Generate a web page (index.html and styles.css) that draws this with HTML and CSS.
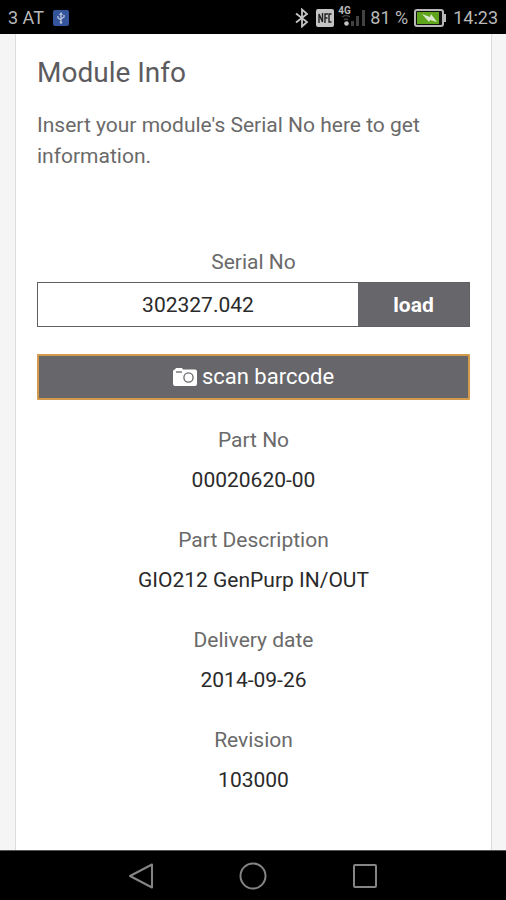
FILE: index.html
```html
<!DOCTYPE html>
<html lang="en">
<head>
<meta charset="utf-8">
<meta name="viewport" content="width=device-width, initial-scale=1">
<title>Module Info</title>
<link rel="stylesheet" href="styles.css">
</head>
<body>
<header class="status">
  <div class="status-group">
    <span>3 AT</span>
    <svg class="app-icon" width="16" height="16" viewBox="0 0 16 16" aria-hidden="true">
      <rect width="16" height="16" rx="2" fill="#34549b"/>
      <path d="M8 13V4M8 10L5 8V6M8 9l3-2V5" fill="none" stroke="#b9c4dc" stroke-width="1.300"/>
      <path d="M8 2L6 5h4z" fill="#b9c4dc"/>
      <circle cx="8" cy="12.500" r="1.300" fill="#b9c4dc"/>
    </svg>
  </div>
  <div class="status-group">
    <svg width="14" height="20" viewBox="0 0 14 20" aria-hidden="true">
      <path d="M1 5.500L12 14 7 18.500V1.500L12 6 1 14.500" fill="none" stroke="#c4c4c4" stroke-width="1.800"/>
    </svg>
    <svg class="nfc" width="18" height="18" viewBox="0 0 18 18" aria-hidden="true">
      <rect width="18" height="18" rx="2" fill="#c4c4c4"/>
      <path d="M3 14V5l3.500 8V4M9 14V5h3M9 9h2.500M15.500 5H13v8h2.500" fill="none" stroke="#222" stroke-width="1.400"/>
    </svg>
    <div class="signal">
      <span class="network">4G</span>
      <svg width="28" height="20" viewBox="0 0 28 20" aria-hidden="true">
        <path d="M4 9q4-3 8 0M6 12q2-2 4 0" fill="none" stroke="#444" stroke-width="1.500"/>
        <circle cx="8.500" cy="15.500" r="2.300" fill="#c4c4c4"/>
        <path d="M13 18v-5h3v5zM18 18V8h3v10zM24 18V2h3v16z" fill="#414141"/>
      </svg>
    </div>
    <span class="percent">81 %</span>
    <svg class="battery" width="33" height="18" viewBox="0 0 33 18" aria-hidden="true">
      <rect x="1" y="1" width="28" height="16" rx="2" fill="#111" stroke="#b8b8b8" stroke-width="2"/>
      <path d="M30 5h2v8h-2z" fill="#b8b8b8"/>
      <path d="M3 3h22v12H3z" fill="#5fa51b"/>
      <path d="M8 5l8 3 1-3 6 8-7-2-1 2z" fill="#dce9ce"/>
    </svg>
    <span>14:23</span>
  </div>
</header>

<main class="card">
  <h1>Module Info</h1>
  <p class="intro">Insert your module's Serial No here to get information.</p>
  <form class="lookup">
    <label for="serial">Serial No</label>
    <div class="field">
      <input id="serial" type="text" value="302327.042">
      <button class="load" type="button">load</button>
    </div>
    <button class="scan" type="button">
      <svg width="24" height="18" viewBox="0 0 24 18" aria-hidden="true">
        <path d="M2 1.500L3 0h6l1 1.500h12q2 0 2 2V16q0 2-2 2H2q-2 0-2-2V3.500q0-2 2-2z" fill="#fff"/>
        <path d="M3 4h6" stroke="#67666a" stroke-width="1.300"/>
        <circle cx="15.500" cy="9.500" r="4.600" fill="none" stroke="#67666a" stroke-width="1.300"/>
      </svg>
      <span>scan barcode</span>
    </button>
  </form>
  <dl class="details">
    <div><dt>Part No</dt><dd>00020620-00</dd></div>
    <div><dt>Part Description</dt><dd>GIO212 GenPurp IN/OUT</dd></div>
    <div><dt>Delivery date</dt><dd>2014-09-26</dd></div>
    <div><dt>Revision</dt><dd>103000</dd></div>
  </dl>
</main>

<nav class="system-nav" aria-label="System">
  <button type="button" aria-label="Back">
    <svg width="28" height="28" viewBox="0 0 28 28"><path d="M25 2.500v23L3 14z"/></svg>
  </button>
  <button type="button" aria-label="Home">
    <svg width="28" height="28" viewBox="0 0 28 28"><circle cx="14" cy="14" r="12.500"/></svg>
  </button>
  <button type="button" aria-label="Recent apps">
    <svg width="28" height="28" viewBox="0 0 28 28"><rect x="3" y="3" width="22" height="22" rx="1"/></svg>
  </button>
</nav>
</body>
</html>
```
FILE: styles.css
```css
* {
  box-sizing: border-box;
}

body {
  margin: 0;
  min-height: 100vh;
  display: flex;
  flex-direction: column;
  background: #f5f5f5;
  color: #6a6a6a;
  font: 21px/30px Roboto, "Liberation Sans", sans-serif;
}

button,
input {
  font: inherit;
  margin: 0;
}

.status {
  display: flex;
  justify-content: space-between;
  align-items: center;
  height: 34px;
  padding: 2px 8px 0;
  background: #000;
  color: #b8b8b8;
  font-size: 18px;
  line-height: 32px;
}

.status-group {
  display: flex;
  align-items: center;
}

.app-icon {
  margin-left: 9px;
}

.nfc {
  margin-left: 7px;
}

.signal {
  position: relative;
  display: flex;
  margin: 0 4px;
}

.network {
  position: absolute;
  top: -3px;
  left: 0;
  font-size: 10px;
  font-weight: 700;
  line-height: 12px;
}

.battery {
  margin: 0 6px;
}

.card {
  flex: 1;
  margin: 0 14px 0 15px;
  padding: 24px 21px 30px;
  border: solid #dcdcdc;
  border-width: 0 1px;
  background: #fff;
}

h1 {
  margin: 0 0 22px;
  color: #5c5c60;
  font-size: 28px;
  font-weight: 400;
  line-height: 30px;
}

.intro {
  margin: 0 0 75px;
  line-height: 31px;
}

.lookup {
  display: flex;
  flex-direction: column;
  text-align: center;
}

.field {
  display: flex;
  height: 45px;
  margin: 5px 0 27px;
  border: 1px solid #606064;
}

.field input {
  flex: 1;
  min-width: 0;
  padding: 0;
  border: 0;
  background: #fff;
  color: #2a2a2a;
  text-align: center;
}

.load {
  width: 111px;
  padding: 0;
  border: 0;
  background: #67666a;
  color: #fff;
  font-weight: 700;
}

.scan {
  display: flex;
  align-items: center;
  justify-content: center;
  gap: 5px;
  height: 46px;
  padding: 0;
  border: 2px solid #d39a4c;
  border-radius: 1px;
  background: #67666a;
  color: #fff;
  font-size: 22px;
}

.details {
  margin: 20px 0 0;
  text-align: center;
  line-height: 40px;
}

.details div {
  margin-bottom: 20px;
}

.details dd {
  margin: 0;
  color: #2a2a2a;
}

.system-nav {
  display: flex;
  justify-content: center;
  align-items: center;
  gap: 84px;
  height: 50px;
  border-top: 1px solid #555;
  background: #000;
}

.system-nav button {
  display: flex;
  padding: 0;
  border: 0;
  background: none;
}

.system-nav svg {
  fill: none;
  stroke: #858585;
  stroke-width: 2;
  stroke-linejoin: round;
}
```
